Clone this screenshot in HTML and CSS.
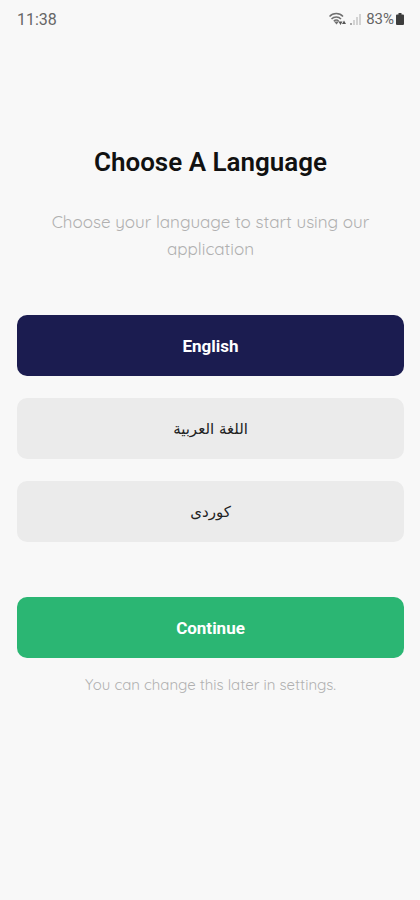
FILE: index.html
```html
<!DOCTYPE html>
<html lang="en">
<head>
<meta charset="utf-8">
<meta name="viewport" content="width=device-width, initial-scale=1">
<title>Choose A Language</title>
<link rel="stylesheet" href="styles.css">
</head>
<body>
<header class="status">
  <span>11:38</span>
  <div class="status-icons">
    <svg class="wifi" width="18" height="14" viewBox="0 0 18 14" aria-hidden="true">
      <g fill="none" stroke="#707070" stroke-width="1.500">
        <path d="M.5 4.500C4 .5 10.500 .5 14 4.500"/>
        <path d="M2.500 7C5 4.200 9.500 4.200 12 7"/>
        <path d="M4.800 9.300C6.300 7.700 8.200 7.700 9.700 9.300"/>
      </g>
      <path d="M5 9.500h5L7.500 12.500z" fill="#707070"/>
      <path d="M9.500 9.500h4l-2 3.500zM13 12l2-3.500 2 3.500z" fill="#555"/>
    </svg>
    <svg class="signal" width="12" height="12" viewBox="0 0 12 12" aria-hidden="true">
      <path d="M0 10h2v2H0z" fill="#aaa"/>
      <path d="M3 7h2v5H3zM6 4h2v8H6zM9 1h2v11H9z" fill="#d3d3d3"/>
    </svg>
    <span class="percent">83%</span>
    <svg class="battery" width="8" height="12" viewBox="0 0 8 12" aria-hidden="true">
      <path d="M2.500 0h3v1.500H7a1 1 0 0 1 1 1V11a1 1 0 0 1-1 1H1a1 1 0 0 1-1-1V2.500a1 1 0 0 1 1-1h1.500z" fill="#3d3d3d"/>
    </svg>
  </div>
</header>
<main class="screen">
  <h1 class="title">Choose A Language</h1>
  <p class="intro">Choose your language to start using our application</p>
  <div class="languages" role="group" aria-label="Language">
    <button class="button button-selected" type="button" aria-pressed="true">English</button>
    <button class="button button-arabic" type="button" aria-pressed="false" lang="ar" dir="rtl">اللغة العربية</button>
    <button class="button button-arabic" type="button" aria-pressed="false" lang="ckb" dir="rtl">كوردى</button>
  </div>
  <button class="button button-continue" type="button">Continue</button>
  <p class="note">You can change this later in settings.</p>
</main>
</body>
</html>
```
FILE: styles.css
```css
* {
  box-sizing: border-box;
}

body {
  margin: 0;
  background: #f8f8f8;
  color: #111;
  font-family: Roboto, sans-serif;
}

.status {
  display: flex;
  align-items: center;
  justify-content: space-between;
  height: 38px;
  padding: 0 16px 0 17px;
  color: #666;
  font-size: 16px;
}

.status-icons {
  display: flex;
  align-items: center;
}

.wifi {
  margin-right: 3px;
}

.signal {
  margin-right: 4px;
}

.percent {
  margin-right: 2px;
  font-size: 15px;
}

.screen {
  padding: 108px 16px 24px 17px;
  text-align: center;
}

.title {
  margin: 0;
  font-size: 26px;
  font-weight: 600;
  line-height: 32px;
}

.intro,
.note {
  margin: 0;
  color: #b0b0b0;
  font-family: Quicksand, Lato, sans-serif;
  font-weight: 400;
}

.intro {
  margin-top: 30px;
  padding: 0 24px;
  font-size: 17px;
  line-height: 27px;
}

.languages {
  display: grid;
  gap: 22px;
  margin: 53px 0 55px;
}

.button {
  display: block;
  width: 100%;
  height: 61px;
  padding: 0;
  border: 0;
  border-radius: 10px;
  background: #ebebeb;
  color: #222;
  font-family: inherit;
  font-size: 17px;
  font-weight: 700;
}

.button-selected {
  background: #1b1c50;
  color: #fff;
}

.button-arabic {
  font-family: "DejaVu Sans", sans-serif;
  font-size: 15px;
  font-weight: 400;
}

.button-continue {
  background: #2bb673;
  color: #fff;
}

.note {
  margin-top: 16px;
  font-size: 15px;
  line-height: 22px;
}
```
